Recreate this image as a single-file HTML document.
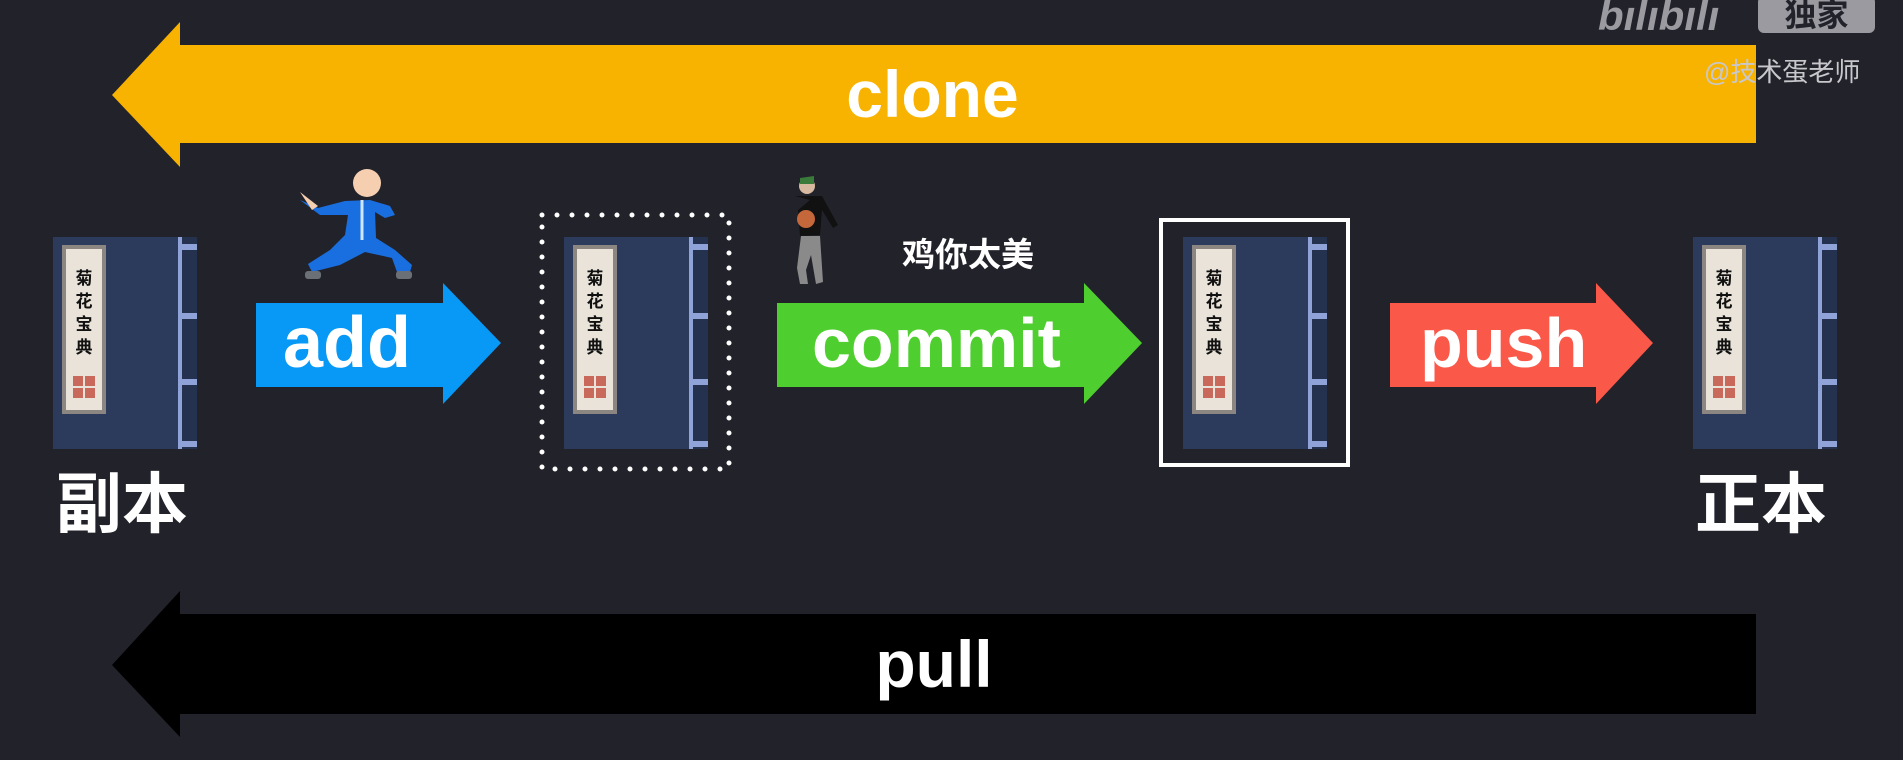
<!DOCTYPE html>
<html><head><meta charset="utf-8"><style>
body{margin:0;width:1903px;height:760px;background:#22222b;overflow:hidden;position:relative;font-family:"Liberation Sans","Noto Sans CJK SC",sans-serif}
.a{position:absolute}
.txt{position:absolute;color:#fff;font-weight:bold;white-space:nowrap}
.book{position:absolute;top:237px;width:144px;height:212px}
.book .bd{position:absolute;left:0;top:0;width:127px;height:212px;background:#2c3b5c}
.book .sp{position:absolute;left:125px;top:0;width:4px;height:212px;background:#8fa3d8}
.book .rs{position:absolute;left:129px;top:0;width:15px;height:212px;background:#25324f}
.book .tab{position:absolute;left:129px;width:15px;height:6px;background:#8fa3d8}
.book .lb{position:absolute;left:9px;top:8px;width:44px;height:169px;background:#8b8681}
.book .lbi{position:absolute;left:13px;top:12px;width:36px;height:161px;background:#e9e3d9}
.book .ch{position:absolute;left:13px;top:30px;width:36px;text-align:center;font-size:17px;line-height:23px;font-weight:bold;color:#111}
.book .sq{position:absolute;width:10px;height:10px;background:#c9695c}
</style></head><body>
<svg class="a" style="left:0;top:0" width="1903" height="760">
<polygon points="112,95 180,22 180,45 1756,45 1756,143 180,143 180,167" fill="#f8b200"/>
<polygon points="112,665 180,591 180,614 1756,614 1756,714 180,714 180,737" fill="#000"/>
<polygon points="256,303 443,303 443,283 501,343 443,404 443,387 256,387" fill="#0898f6"/>
<polygon points="777,303 1084,303 1084,283 1142,343 1084,404 1084,387 777,387" fill="#4fcf2f"/>
<polygon points="1390,303 1596,303 1596,283 1653,343 1596,404 1596,387 1390,387" fill="#fa5849"/>
<rect x="542" y="215" width="187" height="254" fill="none" stroke="#fff" stroke-width="5" stroke-linecap="round" stroke-dasharray="0 15"/>
<rect x="1161" y="220" width="187" height="245" fill="none" stroke="#fff" stroke-width="4"/>
<g>
<circle cx="367" cy="183" r="14" fill="#f6cfb0"/>
<path d="M300,200 L318,208 L345,201 L370,200 L390,206 L395,215 L385,218 L375,212 L376,238 L395,250 L412,265 L410,272 L397,272 L392,258 L365,252 L340,265 L312,272 L308,264 L330,250 L345,235 L348,215 L320,215 Z" fill="#1a6fe0"/>
<path d="M300,192 L312,210 L318,206 Z" fill="#f6cfb0"/>
<rect x="305" y="271" width="16" height="8" rx="3" fill="#6b6f76"/>
<rect x="396" y="271" width="16" height="8" rx="3" fill="#6b6f76"/>
<line x1="362" y1="200" x2="362" y2="240" stroke="#cfe6ff" stroke-width="3"/>
</g>
<g>
<circle cx="807" cy="186" r="8" fill="#d7b8a0"/>
<path d="M800,178 L814,176 L814,184 L800,184Z" fill="#3a7a3a"/>
<path d="M795,196 L822,196 L838,225 L833,228 L822,210 L820,235 L800,236 L798,210 L810,200 Z" fill="#111"/>
<path d="M801,236 L820,236 L823,282 L816,284 L811,255 L806,270 L808,284 L800,284 L797,268 Z" fill="#8a8a8a"/>
<circle cx="806" cy="219" r="9" fill="#c4673a"/>
</g>
</svg>
<div class="txt" style="left:0;width:1865px;text-align:center;top:56px;font-size:66px;line-height:76px">clone</div>
<div class="txt" style="left:0;width:1868px;text-align:center;top:626px;font-size:66px;line-height:76px">pull</div>
<div class="txt" style="left:283px;top:303px;font-size:72px;line-height:80px">add</div>
<div class="txt" style="left:812px;top:303px;font-size:70px;line-height:80px">commit</div>
<div class="txt" style="left:1420px;top:303px;font-size:70px;line-height:80px">push</div>
<div class="txt" style="left:902px;top:235px;font-size:33px;line-height:40px">鸡你太美</div>
<div class="txt" style="left:56px;top:466px;font-size:66px;line-height:76px">副本</div>
<div class="txt" style="left:1695px;top:466px;font-size:66px;line-height:76px">正本</div>
<div class="txt" style="left:1598px;top:-8px;font-size:42px;line-height:48px;color:#9a9aa0;font-style:italic">bılıbılı</div>
<div class="a" style="left:1758px;top:-4px;width:117px;height:37px;background:#9a9aa0;border-radius:6px;color:#22222b;font-weight:bold;font-size:32px;line-height:38px;text-align:center">独家</div>
<div class="txt" style="left:1704px;top:56px;font-size:26px;line-height:32px;color:#c8c8cc;font-weight:normal">@技术蛋老师</div>

<div class="book" style="left:53px"><div class="bd"></div><div class="sp"></div><div class="rs"></div><div class="tab" style="top:7px"></div><div class="tab" style="top:76px"></div><div class="tab" style="top:142px"></div><div class="tab" style="top:204px"></div><div class="lb"></div><div class="lbi"></div><div class="ch">菊<br>花<br>宝<br>典</div><div class="sq" style="left:20px;top:139px"></div><div class="sq" style="left:32px;top:139px"></div><div class="sq" style="left:20px;top:151px"></div><div class="sq" style="left:32px;top:151px"></div></div>
<div class="book" style="left:564px"><div class="bd"></div><div class="sp"></div><div class="rs"></div><div class="tab" style="top:7px"></div><div class="tab" style="top:76px"></div><div class="tab" style="top:142px"></div><div class="tab" style="top:204px"></div><div class="lb"></div><div class="lbi"></div><div class="ch">菊<br>花<br>宝<br>典</div><div class="sq" style="left:20px;top:139px"></div><div class="sq" style="left:32px;top:139px"></div><div class="sq" style="left:20px;top:151px"></div><div class="sq" style="left:32px;top:151px"></div></div>
<div class="book" style="left:1183px"><div class="bd"></div><div class="sp"></div><div class="rs"></div><div class="tab" style="top:7px"></div><div class="tab" style="top:76px"></div><div class="tab" style="top:142px"></div><div class="tab" style="top:204px"></div><div class="lb"></div><div class="lbi"></div><div class="ch">菊<br>花<br>宝<br>典</div><div class="sq" style="left:20px;top:139px"></div><div class="sq" style="left:32px;top:139px"></div><div class="sq" style="left:20px;top:151px"></div><div class="sq" style="left:32px;top:151px"></div></div>
<div class="book" style="left:1693px"><div class="bd"></div><div class="sp"></div><div class="rs"></div><div class="tab" style="top:7px"></div><div class="tab" style="top:76px"></div><div class="tab" style="top:142px"></div><div class="tab" style="top:204px"></div><div class="lb"></div><div class="lbi"></div><div class="ch">菊<br>花<br>宝<br>典</div><div class="sq" style="left:20px;top:139px"></div><div class="sq" style="left:32px;top:139px"></div><div class="sq" style="left:20px;top:151px"></div><div class="sq" style="left:32px;top:151px"></div></div>
</body></html>
